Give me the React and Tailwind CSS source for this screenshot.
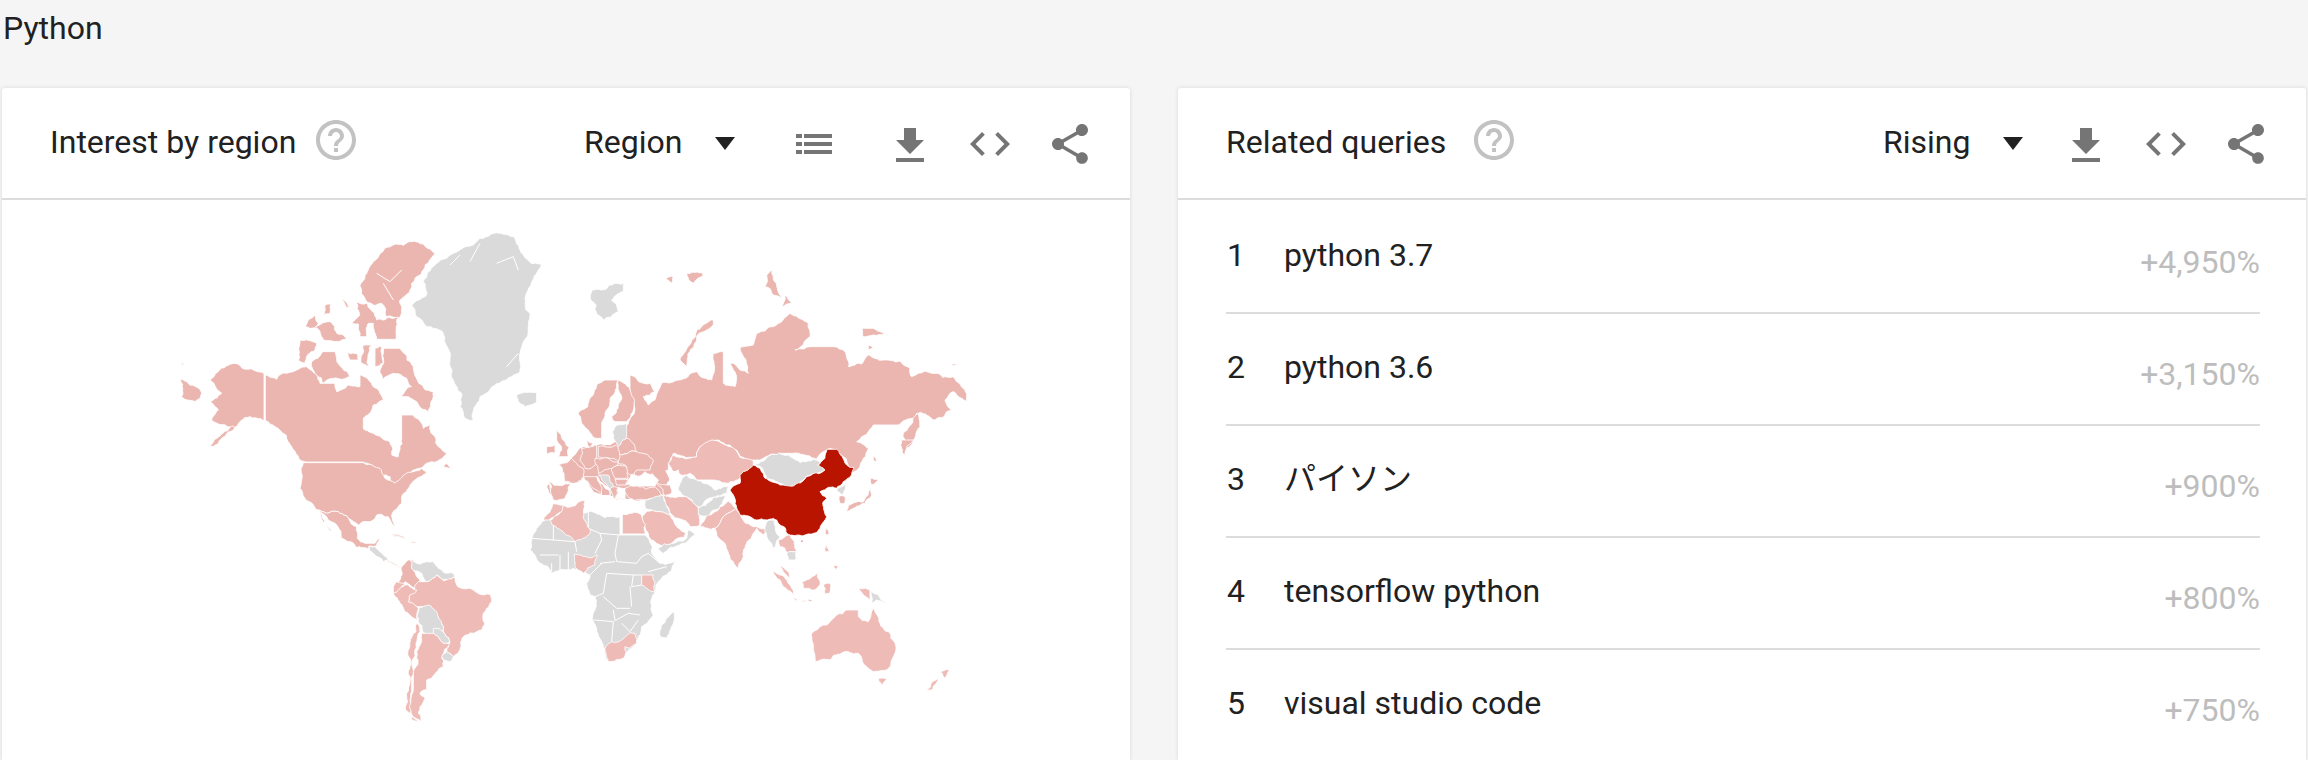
const PINK = "#ebb5b0";
const LIGHT = "#efbbb7";
const PALE = "#f6e2e0";
const GRAY = "#dadada";
const RED = "#b91400";
const SEA = "#ffffff";

const rows = [
  ["1", "python 3.7", "+4,950%"],
  ["2", "python 3.6", "+3,150%"],
  ["3", "パイソン", "+900%"],
  ["4", "tensorflow python", "+800%"],
  ["5", "visual studio code", "+750%"],
];

// each group is traced in the pixel space of one 3x crop of the map
const northAmerica = [
  [PINK, "150,480 215,432 260,448 312,460 312,602 270,590 245,600 225,622 155,600 175,570 150,545 185,520"],
  [PINK, "225,622 185,655 150,680 180,648 215,618"],
  [PINK, "316,465 350,478 400,455 440,440 470,462 480,490 525,490 530,515 565,495 600,500 600,465 630,485 660,520 670,540 640,555 610,595 610,625 640,640 690,665 695,705 715,710 725,650 725,585 760,585 790,625 810,615 835,680 860,700 850,712 800,730 760,750 735,770 700,795 690,770 655,760 640,738 608,726 437,726 395,680 345,620 316,600"],
  [PINK, "62,478 125,520 105,545 65,530"],
  [PINK, "65,428 75,432 65,436"],
  [PINK, "860,730 878,748 850,740"],
  [PINK, "825,100 790,72 755,65 700,75 640,125 625,150 600,195 615,235 640,255 665,250 680,290 715,295 720,240 755,190 790,150"],
  [PINK, "670,385 720,385 760,440 820,515 805,575 770,545 745,530 720,530 755,500 740,475 700,460 670,480 660,450"],
  [PINK, "545,225 585,270 560,262"],
  [PINK, "495,255 515,250 510,280 490,285"],
  [PINK, "435,320 465,285 475,310 470,325"],
  [PINK, "465,320 510,305 530,340 560,355 490,360"],
  [PINK, "590,245 620,250 650,300 715,292 708,358 650,358 640,310 625,310 620,350 600,350 595,312 575,310 600,285"],
  [PINK, "420,360 470,370 465,390 435,430 415,420"],
  [PINK, "455,425 490,395 525,395 530,420 570,470 545,478 520,475 490,490 470,465"],
  [PINK, "560,395 590,400 595,420 570,420"],
  [PINK, "610,375 635,375 625,440 605,430"],
  [PINK, "645,385 665,380 670,430 645,440"],
  [GRAY, "1010,38 1060,50 1080,90 1145,135 1110,200 1095,235 1105,330 1080,400 1075,460 1020,490 960,530 940,600 915,595 900,560 905,520 880,480 870,420 850,340 800,320 770,290 755,255 800,225 790,185 830,130 880,100 960,55"],
  [GRAY, "1070,525 1130,520 1130,545 1095,560 1075,545"],
];

const americas = [
  [PINK, "70,8 250,8 300,25 345,70 400,35 425,25 440,40 405,60 385,85 365,110 365,130 335,165 345,200 325,170 290,165 235,195 205,175 175,155 140,160 110,150 75,115 60,85 65,40"],
  [PINK, "110,150 140,160 175,155 205,175 230,200 232,235 255,250 285,250 298,235 290,255 268,258 265,268 230,262 185,235 170,195 140,170"],
  [PINK, "118,155 155,215 130,185"],
  [GRAY, "268,258 295,270 325,300 310,305 285,285 268,270"],
  [PALE, "325,300 365,320 360,325 320,306"],
  [PALE, "325,220 350,222 385,240 345,232"],
  [PALE, "390,242 430,250 395,250"],
  [PINK, "400,298 385,300 365,320 360,360 345,375 375,365 410,385 420,360 410,350 395,325"],
  [GRAY, "390,300 460,305 475,325 520,340 525,350 490,360 470,345 440,365 425,340 395,325"],
  [LIGHT, "415,365 440,365 470,345 490,362 525,352 530,375 570,385 632,405 635,425 610,460 605,510 560,525 545,540 540,570 520,590 500,575 510,545 490,515 485,490 450,440 415,440 385,425 395,400"],
  [LIGHT, "340,380 350,365 375,370 350,400 340,400"],
  [LIGHT, "340,400 375,375 410,390 390,405 385,425 415,445 412,480 375,455 360,430"],
  [GRAY, "418,442 445,435 485,490 490,515 430,518 415,485"],
  [GRAY, "460,505 490,515 510,545 490,550 460,520"],
  [GRAY, "500,575 520,590 510,605 490,600 485,590"],
  [LIGHT, "412,490 420,515 405,570 395,650 395,690 390,720 395,770 415,785 425,795 395,780 380,700 390,620"],
  [LIGHT, "425,520 460,520 490,550 510,550 485,590 490,620 470,635 455,655 440,660 440,690 420,700 435,715 420,740 415,760 425,785 400,770 392,730 400,685 400,640 410,575"],
];

const eurasia = [
  [PINK, "265,610 285,570 270,520 270,465 330,490 345,515 310,530 325,555 345,540 365,490 420,480 470,455 515,480 520,400 550,395 550,490 585,500 570,430 600,450 625,460 600,385 640,375 650,340 710,315 750,280 805,310 810,350 765,390 810,380 880,380 910,390 925,440 985,405 1040,420 1110,445 1115,470 1175,460 1240,470 1280,520 1280,545 1240,515 1215,540 1235,570 1180,600 1130,580 1075,615 1000,615 950,665 985,685 960,740 920,775 905,790 930,745 895,700 870,685 850,695 830,720 760,700 720,700 640,720 600,710 570,675 530,660 480,680 470,710 400,700 385,730 385,750 340,760 340,720 290,690 280,660 265,640"],
  [PINK, "1085,700 1090,640 1135,580 1140,620 1110,680"],
  [PINK, "420,420 470,330 520,300 520,315 470,350 445,400 440,440"],
  [GRAY, "155,210 210,195 250,190 250,215 215,240 235,275 190,300 170,280"],
  [PINK, "375,175 400,170 395,190"],
  [PINK, "440,160 490,165 460,190"],
  [PINK, "680,165 697,150 710,195 725,235 700,225 675,200"],
  [PINK, "735,225 755,250 725,260"],
  [PINK, "965,325 1000,325 1050,350 1000,345 970,350"],
  [PINK, "985,375 1000,385 985,390"],
  [PINK, "1235,432 1255,432 1240,438"],
  [LIGHT, "385,730 400,705 470,710 480,680 530,662 570,680 600,712 640,722 640,740 610,770 560,790 520,780 470,780 450,760 400,755"],
];

const africa = [
  [GRAY, "35,120 50,85 65,65 205,35 300,50 300,105 375,105 395,160 420,190 470,178 440,225 405,275 400,345 365,380 345,435 295,470 265,485 250,440 220,365 225,290 200,250 210,225 160,205 95,220 60,190 30,150"],
  [LIGHT, "162,162 232,165 225,195 190,220 165,200"],
  [LIGHT, "365,225 400,225 403,275 365,255"],
  [LIGHT, "255,445 275,425 305,420 330,398 345,400 350,430 310,475 265,485"],
  [GRAY, "315,440 330,445 320,458"],
  [GRAY, "425,375 462,335 460,370 440,415 422,410"],
];

const africaBorders = [
  "100,72 100,120", "35,115 100,120 165,125 170,155", "205,35 205,85 240,100 300,105",
  "240,100 245,120 225,160", "285,160 295,105", "285,160 290,185 350,190 365,170 385,160 420,190",
  "240,190 285,185", "245,190 210,225", "260,220 340,225 335,260", "260,220 250,280 225,290",
  "250,290 290,325 330,325", "330,260 335,320", "335,260 365,255", "340,225 365,225",
  "385,215 440,200", "220,360 280,365 275,425", "280,330 285,362 325,340 360,345",
  "305,370 330,395 355,360", "60,165 115,165", "120,165 120,215", "145,155 145,210", "95,190 95,215",
];

// the first entry is the land under the countries, so it gets no outline of its own
const europe = [
  [PINK, "85,255 125,235 150,205 205,195 255,185 300,130 400,130 420,300 410,345 285,355 260,360 240,345 215,345 160,290 155,300 105,305", true],
  [PINK, "145,100 190,45 225,0 265,0 250,45 225,100 215,130 215,175 195,175 175,150 155,130"],
  [PINK, "265,0 300,30 310,90 290,125 255,125 245,110 275,50"],
  [PINK, "170,180 190,190 180,205"],
  [PINK, "80,150 105,185 115,230 85,230 95,210 80,180"],
  [PINK, "50,200 75,195 75,220 50,222"],
  [GRAY, "255,140 290,130 290,170 270,200 250,175"],
  [PINK, "290,175 315,200 320,215 265,225 262,205"],
  [PINK, "265,225 320,215 370,240 360,270 320,270 310,290 290,275 285,255 265,250"],
  [PINK, "205,200 260,195 265,245 225,235 205,230"],
  [PINK, "155,205 200,195 200,250 165,265 150,240"],
  [PINK, "85,255 125,235 160,265 155,300 130,310 105,305"],
  [PINK, "55,305 125,310 105,355 70,360 60,340 65,320"],
  [PINK, "50,320 60,310 65,350"],
  [PINK, "160,290 200,290 215,345 190,325 175,305"],
  [PINK, "245,265 290,260 295,295 255,295"],
  [PINK, "255,298 295,298 290,315 260,315"],
  [GRAY, "205,285 235,285 250,320 240,345 225,310"],
  [PINK, "240,325 265,322 255,360"],
  [PINK, "195,235 265,250 245,265 205,280"],
  [SEA, "287,312 305,282 330,288 345,275 385,300 375,318 305,318"],
  [SEA, "200,288 240,330 225,325 205,305"],
  [SEA, "265,322 285,325 285,355 258,358"],
  [SEA, "418,285 445,270 458,310 445,355 425,345 425,310"],
  [PINK, "285,325 305,318 375,320 395,345 300,355"],
  [PINK, "375,305 420,315 425,340 400,345"],
  [LIGHT, "400,345 445,350 470,350 505,385 510,435 480,440 445,415 420,400 405,370"],
  [GRAY, "345,360 400,345 420,405 380,395 345,385 335,405"],
  [LIGHT, "335,420 345,400 380,395 420,405 440,440 468,460 462,472 400,497 380,490 355,460"],
  [GRAY, "475,450 495,465 465,490 400,520 385,505 430,490 470,475"],
  [LIGHT, "277,403 335,405 345,462 277,462"],
  [LIGHT, "60,422 100,375 165,360 160,395 172,440 182,455 135,485"],
  [LIGHT, "40,420 70,370 100,375 95,395 55,420"],
  [GRAY, "470,285 520,310 560,330 595,318 590,340 550,352 510,382 470,350 445,330 450,310"],
  [GRAY, "505,385 550,352 590,345 580,360 570,380 530,410 505,405"],
  [LIGHT, "510,440 530,408 570,380 595,362 618,385 582,408 555,445 520,440"],
  [LIGHT, "555,445 582,408 618,385 640,420 680,440 720,445 700,465 680,445 650,490 625,565 600,535 585,490 560,460"],
];

const asiaPacific = [
  [GRAY, "75,72 105,60 148,38 210,68 250,58 285,88 265,98 230,108 190,138 150,130 110,118"],
  [RED, "0,150 30,130 40,95 70,75 90,85 105,115 150,135 190,138 230,110 270,100 285,90 262,75 285,55 290,28 320,28 345,70 372,82 365,105 340,125 320,145 295,142 270,155 290,175 278,190 290,230 270,265 225,285 170,280 140,240 130,235 80,240 30,225 15,190"],
  [GRAY, "320,150 350,130 335,165"],
  [PINK, "328,168 345,170 340,192 330,190"],
  [PINK, "348,215 355,195 400,185 420,145 425,165 405,190 370,205"],
  [PINK, "420,115 445,120 425,135"],
  [PINK, "430,25 440,65 430,60"],
  [PINK, "515,0 552,0 525,48"],
  [GRAY, "110,245 135,240 150,290 130,325 115,300 105,275"],
  [LIGHT, "145,300 180,285 200,335 175,340 165,325 150,320"],
  [GRAY, "170,340 200,335 195,360 175,360"],
  [RED, "213,301 219,301 219,306 213,306"],
  [LIGHT, "150,375 175,395 180,415 160,395"],
  [LIGHT, "128,395 150,405 190,450 190,468 160,440"],
  [LIGHT, "190,472 250,482 240,485 190,475"],
  [LIGHT, "215,425 265,395 270,435 245,450 220,445"],
  [LIGHT, "280,435 300,430 298,460 285,462"],
  [LIGHT, "290,310 298,335 285,335"],
  [LIGHT, "310,375 325,380 318,390"],
  [LIGHT, "290,265 296,285 285,280"],
  [LIGHT, "385,445 420,450 420,480 400,465"],
  [GRAY, "420,450 445,465 480,495 440,480 425,490"],
  [LIGHT, "245,580 300,545 320,525 350,510 385,510 385,530 415,545 430,505 450,550 480,580 498,620 490,650 470,690 430,695 400,670 385,640 345,635 300,660 255,665 250,620"],
  [LIGHT, "445,715 470,718 455,738"],
  [LIGHT, "630,695 658,690 645,715"],
  [LIGHT, "625,715 605,750 590,750"],
];

function noise(a, b) {
  const s = Math.sin(a * 12.9898 + b * 78.233) * 43758.5453;
  return s - Math.floor(s);
}

// midpoint displacement, keyed on the midpoint so shared edges stay shared
function subdivide(p1, p2, out) {
  const len = Math.hypot(p2[0] - p1[0], p2[1] - p1[1]);
  if (len < 10 || p1[0] === p2[0] || p1[1] === p2[1]) return;
  const mx = (p1[0] + p2[0]) / 2;
  const my = (p1[1] + p2[1]) / 2;
  const mid = [mx + (noise(mx, my) - 0.5) * len * 0.3, my + (noise(my, mx) - 0.5) * len * 0.3];
  subdivide(p1, mid, out);
  out.push(mid);
  subdivide(mid, p2, out);
}

function coast(points) {
  const pts = points.split(" ").map((p) => p.split(",").map(Number));
  const out = [];
  pts.forEach((p, i) => {
    out.push(p);
    subdivide(p, pts[(i + 1) % pts.length], out);
  });
  return out.map((p) => p[0].toFixed(1) + "," + p[1].toFixed(1)).join(" ");
}

function Shapes({ origin, shapes }) {
  return (
    <g transform={`translate(${origin}) scale(0.3333)`} stroke="#fff" strokeWidth="2.5" strokeLinejoin="round">
      {shapes.map(([fill, points, bare], i) => (
        <polygon key={i} fill={fill} stroke={bare ? "none" : "#fff"} points={coast(points)} />
      ))}
    </g>
  );
}

function WorldMap() {
  return (
    <svg width="1128" height="560" viewBox="2 200 1128 560" className="block">
      <Shapes origin="160 220" shapes={northAmerica} />
      <Shapes origin="540 220" shapes={eurasia} />
      <Shapes origin="280 460" shapes={americas} />
      <Shapes origin="520 500" shapes={africa} />
      <g transform="translate(520 500) scale(0.3333)" fill="none" stroke="#fff" strokeWidth="3">
        {africaBorders.map((points, i) => (
          <polyline key={i} points={points} />
        ))}
      </g>
      <Shapes origin="530 380" shapes={europe} />
      <Shapes origin="730 440" shapes={asiaPacific} />
      {/* white notches in Greenland and the arctic islands */}
      <g transform="translate(160 220) scale(0.3333)" fill="none" stroke="#fff" strokeWidth="3">
        <polyline points="1010,130 1060,110 1075,150" />
        <polyline points="870,135 900,105" />
        <polyline points="930,125 960,70" />
        <polyline points="1040,440 1075,400" />
        <polyline points="650,160 690,185 725,150" />
        <polyline points="670,190 700,240" />
      </g>
    </svg>
  );
}

function HelpIcon() {
  return (
    <svg viewBox="0 0 24 24" className="w-12 h-12 fill-[#c2c2c2] mt-[28px]">
      <path d="M11 18h2v-2h-2v2zm1-16C6.48 2 2 6.48 2 12s4.48 10 10 10 10-4.48 10-10S17.52 2 12 2zm0 18c-4.41 0-8-3.59-8-8s3.59-8 8-8 8 3.59 8 8-3.59 8-8 8zm0-14c-2.21 0-4 1.79-4 4h2c0-1.1.9-2 2-2s2 .9 2 2c0 2-3 1.75-3 5h2c0-2.25 3-2.5 3-5 0-2.21-1.79-4-4-4z" />
    </svg>
  );
}

function Caret() {
  return (
    <svg viewBox="0 0 20 13" className="w-5 h-[13px] fill-[#212121] mt-[49px]">
      <polygon points="0,0 20,0 10,13" />
    </svg>
  );
}

function ListIcon() {
  return (
    <div className="w-9 h-5 mt-[46px] grid grid-cols-[6px_28px] gap-x-[2px] content-between">
      {[0, 1, 2].map((i) => (
        <div key={i} className="contents">
          <div className="h-1 bg-[#757575]" />
          <div className="h-1 bg-[#757575]" />
        </div>
      ))}
    </div>
  );
}

function DownloadIcon() {
  return (
    <svg viewBox="0 0 24 24" className="w-12 h-12 fill-[#757575] mt-[34px]">
      <path d="M19 9h-4V3H9v6H5l7 7 7-7zM5 18v2h14v-2H5z" />
    </svg>
  );
}

function CodeIcon() {
  return (
    <svg viewBox="0 0 24 24" className="w-12 h-12 fill-[#757575] mt-[32px]">
      <path d="M9.4 16.6L4.8 12l4.6-4.6L8 6l-6 6 6 6 1.4-1.4zm5.2 0l4.6-4.6-4.6-4.6L16 6l6 6-6 6-1.4-1.4z" />
    </svg>
  );
}

function ShareIcon() {
  return (
    <svg viewBox="0 0 24 24" className="w-12 h-12 fill-[#757575] mt-[32px]">
      <path d="M18 16.08c-.76 0-1.44.3-1.96.77L8.91 12.7c.05-.23.09-.46.09-.7s-.04-.47-.09-.7l7.05-4.11c.54.5 1.25.81 2.04.81 1.66 0 3-1.34 3-3s-1.34-3-3-3-3 1.34-3 3c0 .24.04.47.09.7L8.04 9.81C7.5 9.31 6.79 9 6 9c-1.66 0-3 1.34-3 3s1.34 3 3 3c.79 0 1.5-.31 2.04-.81l7.12 4.16c-.05.21-.08.43-.08.65 0 1.61 1.31 2.92 2.92 2.92 1.61 0 2.92-1.31 2.92-2.92s-1.31-2.92-2.92-2.92z" />
    </svg>
  );
}

export default function App() {
  return (
    <div className="w-[2308px] h-[760px] overflow-hidden bg-[#f5f5f5] text-[#212121] font-['Roboto','Noto_Sans_CJK_JP',sans-serif]">
      <div className="h-[88px] pl-[3px] pt-[9px] text-[32px] leading-[38px]">Python</div>
      <div className="flex gap-[48px] pl-[2px]">
        {/* Interest by region */}
        <div className="w-[1128px] h-[672px] bg-white rounded-t-[3px] shadow-[0_0_4px_rgba(0,0,0,0.12)]">
          <div className="h-[112px] flex border-b-2 border-[#dcdcdc]">
            <div className="ml-[48px] w-[262px] mt-[35px] text-[32px] leading-[38px]">Interest by region</div>
            <HelpIcon />
            <div className="ml-[224px] w-[131px] mt-[35px] text-[32px] leading-[38px]">Region</div>
            <Caret />
            <div className="ml-[61px]"><ListIcon /></div>
            <div className="ml-[54px]"><DownloadIcon /></div>
            <div className="ml-[32px]"><CodeIcon /></div>
            <div className="ml-[32px]"><ShareIcon /></div>
          </div>
          <WorldMap />
        </div>

        {/* Related queries */}
        <div className="w-[1128px] h-[672px] bg-white rounded-t-[3px] shadow-[0_0_4px_rgba(0,0,0,0.12)]">
          <div className="h-[112px] flex border-b-2 border-[#dcdcdc]">
            <div className="ml-[48px] w-[244px] mt-[35px] text-[32px] leading-[38px]">Related queries</div>
            <HelpIcon />
            <div className="ml-[365px] w-[120px] mt-[35px] text-[32px] leading-[38px]">Rising</div>
            <Caret />
            <div className="ml-[39px]"><DownloadIcon /></div>
            <div className="ml-[32px]"><CodeIcon /></div>
            <div className="ml-[32px]"><ShareIcon /></div>
          </div>
          <div className="pt-[2px] ml-[48px] mr-[46px]">
            {rows.map(([num, query, change]) => (
              <div key={num} className="h-[112px] flex border-b-2 border-[#dcdcdc]">
                <div className="w-[58px] pl-[1px] mt-[34px] text-[32px] leading-[38px]">{num}</div>
                <div className="flex-1 mt-[34px] text-[32px] leading-[38px]">{query}</div>
                <div className="mt-[41px] text-[32px] leading-[38px] text-[#bdbdbd]">{change}</div>
              </div>
            ))}
          </div>
        </div>
      </div>
    </div>
  );
}
